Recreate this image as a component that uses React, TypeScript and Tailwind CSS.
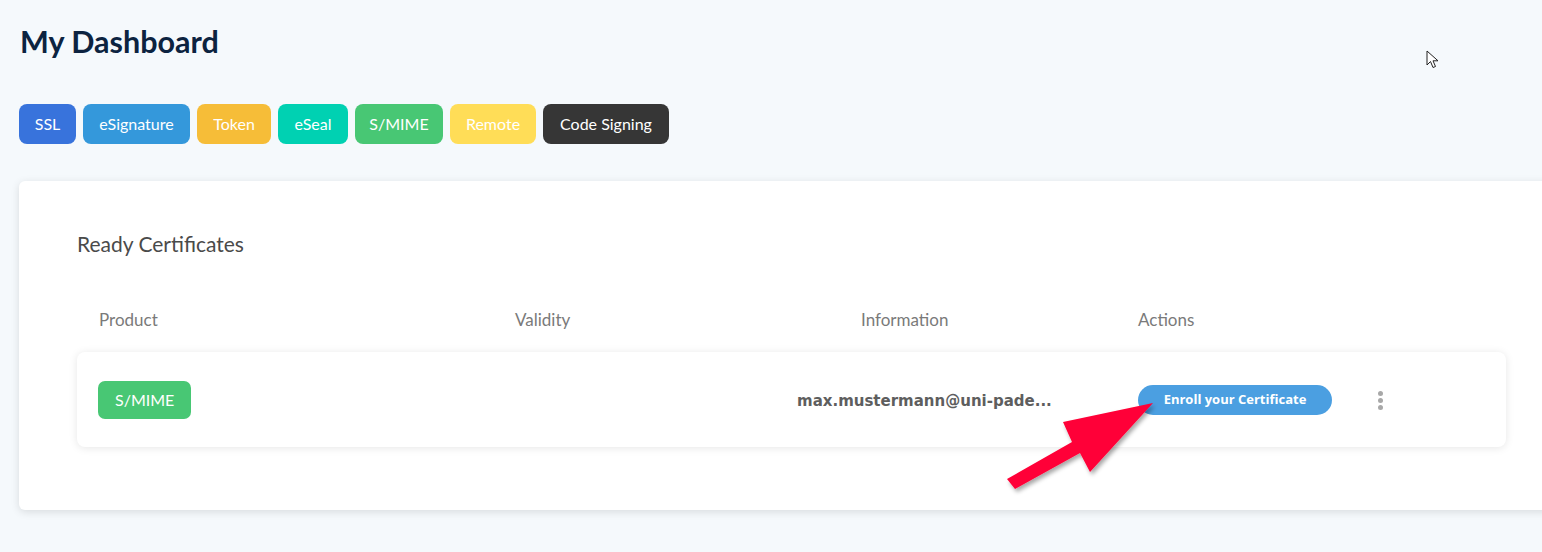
import React from "react";

const tabs = [
  { label: "SSL", color: "bg-[#3873dc]", w: "w-[57px]" },
  { label: "eSignature", color: "bg-[#3498db]", w: "w-[107px]" },
  { label: "Token", color: "bg-[#f6bd38]", w: "w-[74px]" },
  { label: "eSeal", color: "bg-[#00d1b2]", w: "w-[70px]" },
  { label: "S/MIME", color: "bg-[#48c774]", w: "w-[88px]" },
  { label: "Remote", color: "bg-[#ffdd57]", w: "w-[86px]" },
  { label: "Code Signing", color: "bg-[#363636]", w: "w-[126px]" },
];

const Cursor = () => (
  <svg
    className="absolute left-[1426px] top-[50px]"
    width="14"
    height="20"
    viewBox="0 0 14 20"
  >
    <path
      d="M1 1 L1 15 L4.5 11.5 L7 17.5 L9.5 16.5 L7 10.8 L12 10.8 Z"
      fill="#fff"
      stroke="#222"
      strokeWidth="1"
      strokeLinejoin="round"
    />
  </svg>
);

const Arrow = () => (
  <svg
    className="absolute left-0 top-0 pointer-events-none"
    width="1542"
    height="552"
    viewBox="0 0 1542 552"
  >
    <defs>
      <filter id="sh" x="-20%" y="-20%" width="140%" height="140%">
        <feDropShadow dx="2" dy="3" stdDeviation="2" floodColor="#000" floodOpacity="0.35" />
      </filter>
    </defs>
    <polygon
      points="1007,479 1072,442 1063,422 1153,403 1090,472 1080,453 1015,489"
      fill="#ff0037"
      filter="url(#sh)"
    />
  </svg>
);

export default function App() {
  return (
    <div className="relative w-[1542px] h-[552px] overflow-hidden bg-[#f5f9fc] font-['Lato',sans-serif]">
      <div className="pl-[19px] pt-[24px]">
        <h1 className="pl-px text-[30.5px] leading-[34px] font-bold text-[#0c2340]">
          My Dashboard
        </h1>

        <div className="flex gap-[7px] mt-[46px]">
          {tabs.map((t) => (
            <button
              key={t.label}
              className={`${t.color} ${t.w} h-[40px] rounded-[8px] text-white text-[16px] whitespace-nowrap`}
            >
              {t.label}
            </button>
          ))}
        </div>

        <div className="mt-[37px] w-[1560px] h-[329px] bg-white rounded-[6px] shadow-[0_2px_8px_rgba(10,10,10,0.12)] pl-[58px] pt-[50px]">
          <h2 className="text-[21px] leading-[26px] text-[#4a4a4a]">Ready Certificates</h2>

          <div className="flex mt-[53px] pl-[22px] text-[17px] leading-[20px] text-[#7a7a7a]">
            <div className="w-[416px]">Product</div>
            <div className="w-[346px]">Validity</div>
            <div className="w-[277px]">Information</div>
            <div>Actions</div>
          </div>

          <div className="mt-[22px] w-[1429px] h-[95px] bg-white rounded-[8px] shadow-[0_1px_8px_rgba(10,10,10,0.1)] flex items-center pl-[21px]">
            <div className="w-[699px] flex">
              <span className="bg-[#48c774] text-white text-[16px] h-[38px] px-[17px] rounded-[7px] flex items-center">
                S/MIME
              </span>
            </div>
            <div className="w-[341px] pt-[1px]">
              <span className="whitespace-nowrap font-['DejaVu_Sans',sans-serif] font-bold text-[15px] text-[#5e5e5e]">
                max.mustermann@uni-pade...
              </span>
            </div>
            <button className="w-[194px] h-[30px] mt-[1px] rounded-full bg-[#4b9fe1] text-white text-[13px] font-bold font-['Open_Sans',sans-serif]">
              Enroll your Certificate
            </button>
            <div className="ml-[46px] flex flex-col gap-[2px] mt-[1px]">
              <span className="w-[5px] h-[5px] rounded-full bg-[#a8a8a8]" />
              <span className="w-[5px] h-[5px] rounded-full bg-[#a8a8a8]" />
              <span className="w-[5px] h-[5px] rounded-full bg-[#a8a8a8]" />
            </div>
          </div>
        </div>
      </div>

      <Arrow />
      <Cursor />
    </div>
  );
}
